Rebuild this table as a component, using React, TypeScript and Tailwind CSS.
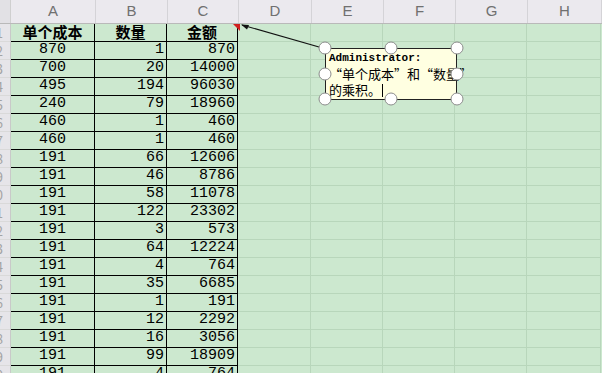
import React from 'react';

const HEAD = [
  { c: 'A', w: 'w-[85px]' },
  { c: 'B', w: 'w-[72px]' },
  { c: 'C', w: 'w-[71px]' },
  { c: 'D', w: 'w-[73px]' },
  { c: 'E', w: 'w-[72px]' },
  { c: 'F', w: 'w-[72px]' },
  { c: 'G', w: 'w-[72px]' },
  { c: 'H', w: 'w-[74px]' },
];

const ROWS: [number, number, number][] = [
  [870, 1, 870],
  [700, 20, 14000],
  [495, 194, 96030],
  [240, 79, 18960],
  [460, 1, 460],
  [460, 1, 460],
  [191, 66, 12606],
  [191, 46, 8786],
  [191, 58, 11078],
  [191, 122, 23302],
  [191, 3, 573],
  [191, 64, 12224],
  [191, 4, 764],
  [191, 35, 6685],
  [191, 1, 191],
  [191, 12, 2292],
  [191, 16, 3056],
  [191, 99, 18909],
  [191, 4, 764],
];

const MONO = "font-['Liberation_Mono','Noto_Sans_CJK_SC',monospace]";
const CJK = "font-['Noto_Sans_CJK_SC','Liberation_Sans',sans-serif]";

// row header is scrolled almost out of view: only the tail of each number shows
function RowNum({ n }: { n: number }) {
  return (
    <div className="w-[11px] shrink-0 overflow-hidden bg-[#e6e5e9] border-r border-[#c9c9c9] border-b border-b-[#d9d9d9] relative">
      <div className={`absolute right-[7px] top-0 h-full flex items-center text-[13px] text-[#a3a3a3] ${CJK}`}>
        {n}
      </div>
    </div>
  );
}

function GreenCells() {
  return (
    <>
      {HEAD.slice(3).map(h => (
        <div key={h.c} className={`${h.w} shrink-0 border-r border-b border-[#b8d6bb]`} />
      ))}
    </>
  );
}

function Handle({ x, y }: { x: number; y: number }) {
  return <circle cx={x} cy={y} r={6} fill="#ffffff" stroke="#8c8c8c" strokeWidth={1} />;
}

export default function App() {
  return (
    <div className="relative w-[602px] h-[373px] overflow-hidden bg-[#cce8cf]">
      {/* column headers */}
      <div className="flex h-[24px] bg-[#ebe9ee] border-b border-[#b9b9b9]">
        <div className="w-[11px] shrink-0 border-r border-[#cfcfcf] bg-[#e2e1e5]" />
        {HEAD.map(h => (
          <div
            key={h.c}
            className={`${h.w} shrink-0 flex items-center justify-center text-[15px] text-[#707070] border-r border-[#d4d3d7] font-['Liberation_Sans',sans-serif]`}
          >
            {h.c}
          </div>
        ))}
      </div>

      {/* title row */}
      <div className="flex h-[18px]">
        <RowNum n={1} />
        <div className={`w-[85px] shrink-0 -ml-px border-l border-b border-r border-black flex items-center justify-center text-[15px] font-bold text-black ${CJK}`}>
          单个成本
        </div>
        <div className={`w-[72px] shrink-0 border-b border-r border-black flex items-center justify-center text-[15px] font-bold text-black ${CJK}`}>
          数量
        </div>
        <div className={`w-[71px] shrink-0 border-b border-r border-black flex items-center justify-center text-[15px] font-bold text-black ${CJK}`}>
          金额
        </div>
        <GreenCells />
      </div>

      {ROWS.map((r, idx) => (
        <div key={idx} className="flex h-[18px]">
          <RowNum n={idx + 2} />
          <div className={`w-[85px] shrink-0 -ml-px border-l border-b border-r border-black flex items-center justify-center text-[15px] text-black ${MONO}`}>
            {r[0]}
          </div>
          <div className={`w-[72px] shrink-0 border-b border-r border-black flex items-center justify-end pr-[2px] text-[15px] text-black ${MONO}`}>
            {r[1]}
          </div>
          <div className={`w-[71px] shrink-0 border-b border-r border-black flex items-center justify-end pr-[2px] text-[15px] text-black ${MONO}`}>
            {r[2]}
          </div>
          <GreenCells />
        </div>
      ))}

      {/* comment indicator + connector */}
      <svg className="absolute left-0 top-0 pointer-events-none" width={602} height={373}>
        <polygon points="233,24 240,24 240,31" fill="#d02020" />
        <line x1={326} y1={49} x2={242} y2={25} stroke="#111" strokeWidth={1.2} />
        <polygon points="241,24.5 249,25 247,29.5" fill="#111" />
      </svg>

      {/* comment box */}
      <div className="absolute left-[325px] top-[48px] w-[132px] h-[52px] bg-[#ffffe1] border border-[#222] pl-[3px] pt-[2px] leading-[16px] text-black whitespace-nowrap">
        <div className={`text-[11px] font-bold leading-[15px] ${MONO}`}>Administrator:</div>
        <div className={`text-[13px] ${CJK}`}>“单个成本”和“数量”</div>
        <div className={`text-[13px] flex items-center ${CJK}`}>
          的乘积。<span className="inline-block w-px h-[13px] bg-black ml-[1px]" />
        </div>
      </div>

      <svg className="absolute left-0 top-0 pointer-events-none" width={602} height={373}>
        <Handle x={325} y={48} />
        <Handle x={391} y={48} />
        <Handle x={457} y={48} />
        <Handle x={325} y={74} />
        <Handle x={457} y={74} />
        <Handle x={325} y={99} />
        <Handle x={391} y={99} />
        <Handle x={457} y={99} />
      </svg>
    </div>
  );
}
